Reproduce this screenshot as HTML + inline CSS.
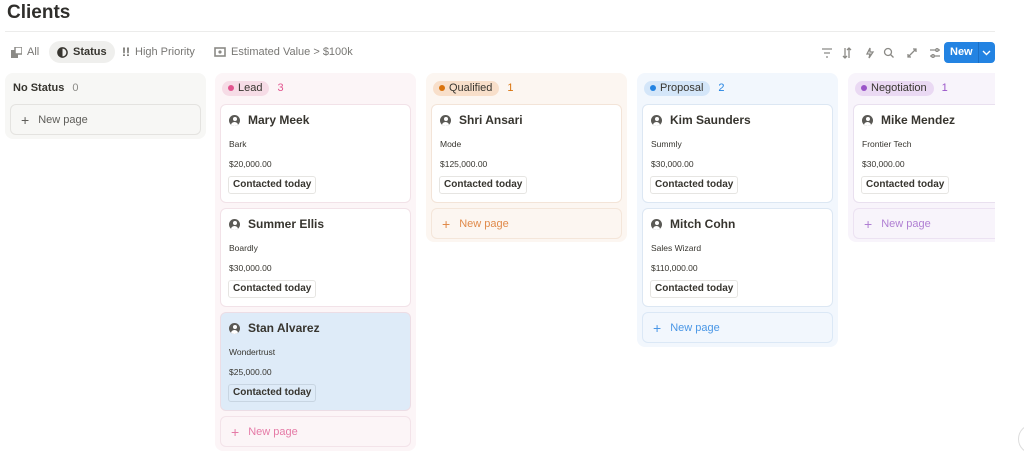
<!DOCTYPE html>
<html><head><meta charset="utf-8"><style>
*{box-sizing:border-box;margin:0;padding:0}
body{width:1024px;height:457px;overflow:hidden;background:#fff;font-family:"Liberation Sans",sans-serif;color:#37352f;position:relative}
.abs{position:absolute}
h1{position:absolute;left:7px;top:2px;font-size:19px;font-weight:bold;color:#2f2e2b}
.hr{position:absolute;left:5px;top:31px;width:990px;height:1px;background:#ececeb}
.tab{position:absolute;top:41px;height:22px;font-size:11px;color:#787774;display:flex;align-items:center;gap:5px}
.tab.sel{background:#efefed;border-radius:11px;padding:0 8px;color:#37352f;font-weight:bold}
.col{position:absolute;top:73px;width:201px;border-radius:8px}
.colh{position:absolute;left:7px;top:8px;height:14px;display:flex;align-items:center;font-size:11px;gap:8px}
.pill{border-radius:8px;padding:0 7px 0 6px;height:15px;display:flex;align-items:center;gap:4px;font-size:11px;color:#37352f}
.pill i{width:6px;height:6px;border-radius:50%;display:inline-block}
.card{position:absolute;left:5px;width:191px;height:99px;background:#fff;border-radius:6px;border:1px solid;}
.card .n{position:absolute;left:8px;top:8px;font-size:12px;font-weight:bold;display:flex;align-items:center;gap:8px;color:#37352f}
.av{width:11px;height:11px;border-radius:50%;background:#5a5955;position:relative;overflow:hidden}
.av:before{content:"";position:absolute;left:3.5px;top:2px;width:4px;height:4px;border-radius:50%;background:#fff}
.av:after{content:"";position:absolute;left:2px;top:7px;width:7px;height:6px;border-radius:50%;background:#fff}
.card .c{position:absolute;left:8px;top:34px;font-size:8.5px}
.card .m{position:absolute;left:8px;top:54px;font-size:8.5px}
.card .t{position:absolute;left:7px;top:71px;height:18px;padding:0 4px;border:1px solid #e6e5e2;border-radius:3px;font-size:10px;font-weight:bold;line-height:16px;background:#fff}
.np{position:absolute;left:5px;width:191px;height:31px;border-radius:6px;border:1px solid;font-size:11px;display:flex;align-items:center;padding-left:10px;gap:9px}
.np b{font-weight:normal;font-size:14px}
</style></head><body>
<h1>Clients</h1>
<div class="hr"></div>
<div class="tab" style="left:11px"><svg width="11" height="11" viewBox="0 0 11 11"><rect x="0" y="3" width="7" height="8" fill="#8b8a86"/><rect x="4" y="0" width="7" height="7" fill="#fff" stroke="#8b8a86" stroke-width="1.5"/></svg>All</div>
<div class="tab sel" style="left:49px"><svg width="11" height="11" viewBox="0 0 12 12"><circle cx="6" cy="6" r="5" fill="none" stroke="#37352f" stroke-width="1.6"/><path d="M6 1A5 5 0 0 0 6 11Z" fill="#37352f"/></svg>Status</div>
<div class="tab" style="left:122px"><b style="color:#6f6e69;font-size:12px">!!</b>High Priority</div>
<div class="tab" style="left:214px"><svg width="12" height="10" viewBox="0 0 12 10"><rect x="1" y="1" width="10" height="8" fill="none" stroke="#8b8a86" stroke-width="1.6"/><circle cx="6" cy="5" r="1.6" fill="#8b8a86"/></svg>Estimated Value &gt; $100k</div>
<svg class="abs" style="left:822px;top:47px" width="122" height="12" viewBox="0 0 122 12" fill="none" stroke="#8b8a86" stroke-width="1.3">
<path d="M0 2h10M2 6h6M4 10h2"/>
<path d="M23 1v10M21 9l2 2 2-2M27 11V1M25 3l2-2 2 2"/>
<path d="M48 1l-3 6h3l-1 4 4-6h-3z"/>
<circle cx="66" cy="5" r="3.5"/><path d="M68.5 7.5l3 3"/>
<path d="M85 11l4-4M93 3l-4 4M85 8v3h3M93 6V3h-3" transform="translate(1,-1)"/>
<path d="M108 3h10M108 9h10"/><circle cx="115" cy="3" r="1.3" fill="#fff"/><circle cx="111" cy="9" r="1.3" fill="#fff"/>
</svg>
<div class="abs" style="left:944px;top:42px;width:51px;height:21px;background:#2383e2;border-radius:4px;color:#fff;font-size:11px;font-weight:bold">
<span style="position:absolute;left:6px;top:4px;line-height:13px">New</span>
<span style="position:absolute;left:34px;top:0;width:1px;height:21px;background:#1a6fc5"></span><svg style="position:absolute;left:38px;top:8px" width="9" height="6" viewBox="0 0 9 6"><path d="M1 1l3.5 3.5L8 1" stroke="#fff" stroke-width="1.4" fill="none"/></svg></div>

<div class="col" style="left:5px;height:66px;background:#f7f7f5">
<div class="colh" style="left:8px;top:8px"><b style="font-size:11px">No Status</b><span style="color:#8b8a86">0</span></div>
<div class="np" style="top:31px;border-color:#e4e3e0;background:#f7f7f5;color:#5e5d59"><b>+</b>New page</div>
</div>

<div class="col" style="left:215px;height:378px;background:#fcf5f7">
<div class="colh"><span class="pill" style="background:#f6dce6"><i style="background:#e2558f"></i>Lead</span><span style="color:#e2558f">3</span></div>
<div class="card" style="top:31px;border-color:#f2e2e8"><div class="n"><span class="av"></span>Mary Meek</div><div class="c">Bark</div><div class="m">$20,000.00</div><div class="t">Contacted today</div></div>
<div class="card" style="top:135px;border-color:#f2e2e8"><div class="n"><span class="av"></span>Summer Ellis</div><div class="c">Boardly</div><div class="m">$30,000.00</div><div class="t">Contacted today</div></div>
<div class="card" style="top:239px;border-color:#ecdde5;background:#deebf8"><div class="n"><span class="av"></span>Stan Alvarez</div><div class="c">Wondertrust</div><div class="m">$25,000.00</div><div class="t" style="background:#deebf8;border-color:#c8d5e2">Contacted today</div></div>
<div class="np" style="top:343px;border-color:#f3e3e9;background:#fcf5f7;color:#e57aa6"><b>+</b>New page</div>
</div>

<div class="col" style="left:426px;height:169px;background:#fcf6f1">
<div class="colh"><span class="pill" style="background:#f8dfca"><i style="background:#d9730d"></i>Qualified</span><span style="color:#d9730d">1</span></div>
<div class="card" style="top:31px;border-color:#f3e4d8"><div class="n"><span class="av"></span>Shri Ansari</div><div class="c">Mode</div><div class="m">$125,000.00</div><div class="t">Contacted today</div></div>
<div class="np" style="top:135px;border-color:#f4e6da;background:#fcf6f1;color:#e08a4a"><b>+</b>New page</div>
</div>

<div class="col" style="left:637px;height:274px;background:#f2f7fd">
<div class="colh"><span class="pill" style="background:#d4e6f9"><i style="background:#2383e2"></i>Proposal</span><span style="color:#2383e2">2</span></div>
<div class="card" style="top:31px;border-color:#dce7f3"><div class="n"><span class="av"></span>Kim Saunders</div><div class="c">Summly</div><div class="m">$30,000.00</div><div class="t">Contacted today</div></div>
<div class="card" style="top:135px;border-color:#dce7f3"><div class="n"><span class="av"></span>Mitch Cohn</div><div class="c">Sales Wizard</div><div class="m">$110,000.00</div><div class="t">Contacted today</div></div>
<div class="np" style="top:239px;border-color:#dbe8f6;background:#f2f7fd;color:#4a97e6"><b>+</b>New page</div>
</div>

<div class="col" style="left:848px;width:147px;height:169px;background:#f8f4fb;border-radius:8px 0 0 8px;overflow:hidden">
<div class="colh"><span class="pill" style="background:#ead9f3"><i style="background:#9a55c8"></i>Negotiation</span><span style="color:#9a55c8">1</span></div>
<div class="card" style="top:31px;border-color:#e9e0ef;border-right:none;border-radius:6px 0 0 6px"><div class="n"><span class="av"></span>Mike Mendez</div><div class="c">Frontier Tech</div><div class="m">$30,000.00</div><div class="t">Contacted today</div></div>
<div class="np" style="top:135px;border-color:#ece2f2;background:#f8f4fb;color:#b07fd3;border-right:none"><b>+</b>New page</div>
</div>
<div class="abs" style="left:1018px;top:424px;width:30px;height:30px;border-radius:50%;border:1px solid #ddd;background:#fff"></div>
</body></html>
